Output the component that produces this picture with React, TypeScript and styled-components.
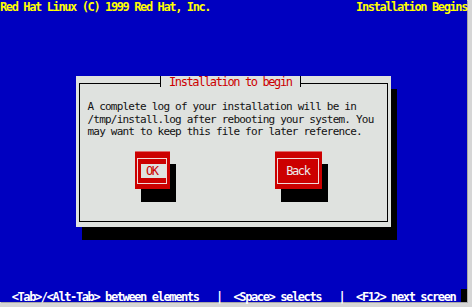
import React from 'react';
import styled, { createGlobalStyle, css } from 'styled-components';

// one text cell of the 80x25 console, scaled to this window
const CELL = 5.8375;

const GlobalStyle = createGlobalStyle`
  html, body {
    margin: 0;
    padding: 0;
    background: #d4d4d4;
  }
`;

const Monitor = styled.div`
  width: 472px;
  height: 307px;
  background: #d6d6d6;
  overflow: hidden;
`;

const Screen = styled.div`
  width: 467px;
  height: 302px;
  background: #0000c0;
  display: flex;
  flex-direction: column;
  font-family: "DejaVu Sans Mono", "Liberation Mono", monospace;
  font-size: 12px;
  letter-spacing: -1.387px;
  white-space: pre;
  box-shadow: 1px 1px 0 #a8a8a8;
`;

const TopBar = styled.div`
  height: 12px;
  flex-shrink: 0;
  display: flex;
  justify-content: space-between;
  color: #ffff00;
  font-weight: bold;
  line-height: 14.6px;
`;

const Desktop = styled.div`
  flex: 1;
  padding: 64px 0 0 76px;
`;

const Window = styled.div`
  width: 315px;
  height: 151px;
  box-sizing: border-box;
  padding: 0 3px 5px;
  background: #dfe2df;
  box-shadow: 6px 13px 0 #000;
  display: flex;
  flex-direction: column;
`;

const TitleRow = styled.div`
  height: 12px;
  flex-shrink: 0;
  display: flex;
`;

const LineStart = styled.div`
  width: 81px;
  box-sizing: border-box;
  margin-top: 7px;
  border-top: 1px solid #000;
  border-left: 1px solid #000;
`;

const LineEnd = styled.div`
  flex: 1;
  margin-top: 7px;
  border-top: 1px solid #000;
  border-right: 1px solid #000;
`;

const Tick = styled.div`
  width: 1px;
  height: 11px;
  background: #000;
`;

const Caption = styled.span`
  padding: 0 8px;
  color: #cc0000;
  line-height: 13.8px;
`;

const Frame = styled.div`
  flex: 1;
  border: 1px solid #000;
  border-top: none;
  display: flex;
  flex-direction: column;
`;

const Message = styled.p`
  margin: 0;
  padding: 13.4px 0 0 7.5px;
  color: #111;
  font-size: 11px;
  letter-spacing: -0.785px;
  line-height: 12.3px;
`;

const ButtonRow = styled.div`
  display: flex;
  gap: 105px;
  padding-left: 55px;
  margin-top: 12.7px;
`;

const Button = styled.div<{ $cols: number }>`
  width: ${p => p.$cols * CELL}px;
  height: 38px;
  box-sizing: border-box;
  padding: 7px 3px 5px 2px;
  background: #cc0000;
  box-shadow: inset 0 1px 0 #e06a6a, 6px 13px 0 #000;
  display: flex;
`;

const ButtonFrame = styled.div`
  flex: 1;
  border: 1px solid #f2d8d8;
  display: flex;
  align-items: center;
  justify-content: center;
`;

const ButtonLabel = styled.span<{ $focused?: boolean }>`
  height: 14px;
  line-height: 14px;
  color: #ececec;
  ${p => p.$focused && css`
    flex: 1;
    margin-left: 3px;
    padding-left: 5px;
    color: #cc0000;
    background: #dfe2df;
  `}
`;

const HelpBar = styled.div`
  height: 12px;
  flex-shrink: 0;
  display: flex;
  color: #fff;
  font-weight: bold;
  line-height: 15.8px;
`;

const Cursor = styled.span`
  margin-left: auto;
  margin-top: -1px;
  width: 6px;
  height: 13px;
  background: #000;
`;

const App: React.FC = () => {
  return (
    <Monitor>
      <GlobalStyle />
      <Screen>
        <TopBar>
          <span>Red Hat Linux (C) 1999 Red Hat, Inc.</span>
          <span>Installation Begins</span>
        </TopBar>

        <Desktop>
          <Window>
            <TitleRow>
              <LineStart />
              <Tick />
              <Caption>Installation to begin</Caption>
              <Tick />
              <LineEnd />
            </TitleRow>
            <Frame>
              <Message>
                {'A complete log of your installation will be in\n'}
                {'/tmp/install.log after rebooting your system. You\n'}
                {'may want to keep this file for later reference.'}
              </Message>
              <ButtonRow>
                <Button $cols={6}>
                  <ButtonFrame>
                    <ButtonLabel $focused>OK</ButtonLabel>
                  </ButtonFrame>
                </Button>
                <Button $cols={8}>
                  <ButtonFrame>
                    <ButtonLabel>Back</ButtonLabel>
                  </ButtonFrame>
                </Button>
              </ButtonRow>
            </Frame>
          </Window>
        </Desktop>

        <HelpBar>
          <span>{'  <Tab>/<Alt-Tab> between elements   |  <Space> selects   |  <F12> next screen'}</span>
          <Cursor />
        </HelpBar>
      </Screen>
    </Monitor>
  );
};

export default App;
